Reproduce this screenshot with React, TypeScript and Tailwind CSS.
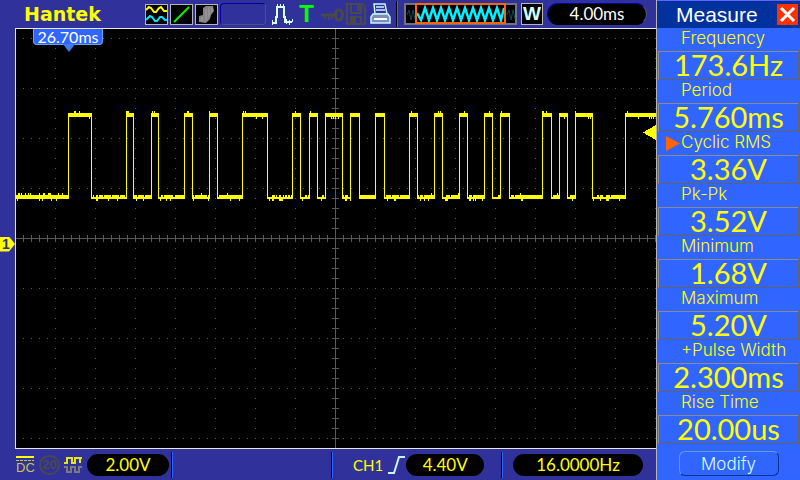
import type { ReactNode } from "react";

const measurements = [
  { label: "Frequency",    value: "173.6Hz" },
  { label: "Period",       value: "5.760ms" },
  { label: "Cyclic RMS",   value: "3.36V", selected: true },
  { label: "Pk-Pk",        value: "3.52V"   },
  { label: "Minimum",      value: "1.68V"   },
  { label: "Maximum",      value: "5.20V"   },
  { label: "+Pulse Width", value: "2.300ms" },
  { label: "Rise Time",    value: "20.00us" },
];

// Rising / falling edge of every pulse, in plot units
const pulses = [
  [68, 91], [126, 133], [151, 158], [184, 192], [209, 217], [242, 267],
  [292, 300], [309, 317], [325, 342], [350, 359], [375, 384], [409, 417],
  [434, 442], [459, 467], [484, 492], [500, 509], [542, 551], [559, 567],
  [575, 592], [625, 655],
];

// Sampling noise on top of both levels: [x, width]
const highUp = [[74, 2], [79, 1], [126, 3], [152, 1], [154, 1], [187, 2], [209, 1], [243, 1], [245, 1], [295, 1], [310, 1], [411, 1], [438, 1], [440, 1], [464, 1], [489, 1], [501, 1], [542, 2], [546, 1], [575, 1], [627, 1]];
const highDown = [[89, 1], [256, 1], [262, 1], [331, 1], [333, 1], [335, 1], [338, 1], [564, 1], [588, 1], [590, 1], [638, 1], [649, 1], [651, 1], [653, 1]];
const lowUp = [[18, 2], [21, 1], [25, 1], [28, 1], [30, 1], [39, 1], [43, 2], [48, 3], [58, 1], [62, 1], [201, 1], [227, 1], [431, 1], [458, 1], [520, 1], [557, 1]];
const lowDown = [[17, 1], [39, 1], [42, 1], [51, 1], [56, 1], [96, 2], [108, 1], [117, 1], [136, 1], [143, 1], [160, 1], [166, 1], [170, 1], [193, 1], [208, 1], [230, 1], [239, 1], [269, 1], [272, 2], [279, 4], [302, 1], [321, 1], [345, 2], [350, 1], [387, 1], [394, 2], [420, 1], [424, 1], [428, 1], [445, 3], [469, 2], [473, 1], [475, 1], [482, 1], [521, 2], [572, 1], [593, 1], [600, 1], [606, 3], [619, 1]];
const lowGaps = [[92, 1], [94, 2], [98, 1], [103, 1], [111, 1], [119, 1], [125, 1], [137, 1], [144, 1], [159, 2], [163, 1], [173, 2], [194, 1], [207, 1], [218, 1], [268, 4], [275, 1], [277, 2], [281, 2], [284, 1], [287, 1], [290, 1], [301, 4], [307, 1], [318, 4], [324, 1], [344, 1], [348, 2], [385, 1], [391, 1], [399, 1], [419, 1], [423, 1], [443, 3], [450, 1], [468, 1], [472, 1], [493, 5], [510, 1], [514, 1], [552, 1], [568, 2], [593, 4], [599, 1], [603, 3], [610, 1]];

const bars = (list: number[][], y: number) => list.map(([x, w]) => `M${x} ${y}h${w}v2h-${w}z`).join("");

function Plot() {
  const columns = Array.from({ length: 16 }, (_, i) => 55 + i * 40);
  const rows = [38, 88, 138, 188, 288, 338, 388, 438];
  let trace = "";
  let x = 16;
  for (const [rise, fall] of pulses) {
    trace += `M${x} 195H${rise + 1}V199H${x}z`;
    trace += `M${rise} 113H${fall + 1}V117H${rise}z`;
    trace += `M${rise} 114h1V199h-1z`;
    if (fall < 655) trace += `M${fall} 114h1V199h-1z`;
    x = fall;
  }

  return (
    <svg
      className="block h-full w-full"
      viewBox="16 29 640 419"
      preserveAspectRatio="none"
      shapeRendering="crispEdges"
      role="img"
      aria-label="Channel 1 waveform"
    >
      <g stroke="#5a5a5a" strokeWidth="1" fill="none">
        {rows.map((y) => (
          <path key={y} d={`M23 ${y + 0.5}H656`} strokeDasharray="1 7" />
        ))}
        {columns.map((c) => (
          <path key={c} d={`M${c + 0.5} 48V440`} strokeDasharray="1 9" />
        ))}
        {/* Centre axes with their ticks */}
        <path d="M16 238.5H656M335.5 29V448" />
        <path d="M23 238.5H656" strokeWidth="7" strokeDasharray="1 7" />
        <path d="M335.5 38V448" strokeWidth="7" strokeDasharray="1 9" />
      </g>
      <g fill="#ffff00">
        <path d={trace} />
        <path d={bars(highUp, 111) + bars(highDown, 117) + bars(lowUp, 193) + bars(lowDown, 199)} />
        <path d="M656 125L643 132.5L656 140z" />
      </g>
      <path fill="#000" d={bars(lowGaps, 195)} />
    </svg>
  );
}

function IconBox({ children }: { children?: ReactNode }) {
  return (
    <div className="h-[21px] w-[23px] border border-[#b5b5b5] bg-black">
      {children}
    </div>
  );
}

function Pill({ className, children }: { className: string; children: ReactNode }) {
  return (
    <div className={`flex h-[22px] shrink-0 items-center justify-center rounded-full bg-black ${className}`}>
      {children}
    </div>
  );
}

function TopBar() {
  return (
    <header className="flex h-7 shrink-0 items-center">
      <h1 className="w-[145px] shrink-0 pl-6 font-['DejaVu_Sans'] text-[19px] leading-6 font-bold text-[#ffff00]">
        Hantek
      </h1>
      <div className="flex shrink-0 items-center gap-0.5">
        <IconBox>
          <svg viewBox="0 0 21 19" fill="none" strokeWidth="2">
            <path stroke="#ffff00" d="M0 5L3 2L5 3L8 7L10 7L13 3L15 2L18 6L21 6" />
            <path stroke="#00e8ff" d="M0 15L4 11L6 12L9 16L11 16L14 12L16 12L19 15L21 15" />
          </svg>
        </IconBox>
        <IconBox>
          <svg viewBox="0 0 21 19" fill="none">
            <path stroke="#00f800" strokeWidth="2" d="M3 17L18 2" />
          </svg>
        </IconBox>
        <IconBox>
          <svg viewBox="0 0 21 19">
            <path fill="#848484" d="M7 3L10 1L17 1L18 6L15 10L14 14L10 18L3 17L3 11L7 10z" />
            <path stroke="#a0a0a0" strokeWidth="1" fill="none" d="M10 4V15M13 2V12M16 3V7M6 12V16" />
          </svg>
        </IconBox>
        <div className="h-[22px] w-[46px] rounded border border-t-[#0000a0] border-r-[#505078] border-b-[#505078] border-l-[#0000a0]" />
      </div>

      <div className="ml-[5px] flex shrink-0 items-center">
        <svg className="h-[22px] w-[22px]" viewBox="0 0 22 22" fill="none" stroke="#d6ffff">
          <path strokeWidth="2" d="M1 20H5V14H6V4H13V14H14V19H21" />
          <path strokeWidth="1" d="M1.5 17V22M4.5 16V21M6.5 1V6M9.5 1V4M12.5 1V6M15.5 16V21M18.5 17V22M21.5 16V19" />
        </svg>
        <span className="w-[27px] text-center font-['Liberation_Sans'] text-[24px] leading-6 font-bold text-[#00ff00]">T</span>
        <svg className="h-[22px] w-6" viewBox="0 0 24 22" fill="none" stroke="#494949">
          <path strokeWidth="3" d="M1 12H16" />
          <path strokeWidth="2" d="M5 13V16M9 13V17M12 13V16" />
          <ellipse cx="19" cy="12" rx="3.5" ry="5" strokeWidth="3" />
        </svg>
        <svg className="ml-0.5 h-[22px] w-5" viewBox="0 0 20 22" fill="none" stroke="#494949">
          <path strokeWidth="2" d="M1 1H17L19 4V21H1z" />
          <path strokeWidth="2" d="M5 1V10H15V1M5 21V14H15V21" />
          <path fill="#494949" stroke="none" d="M11 2H14V8H11zM6 15H10V21H6z" />
        </svg>
        <svg className="ml-1 h-[22px] w-[21px]" viewBox="0 0 21 22" fill="none" stroke="#c8f4ff">
          <path strokeWidth="1.5" d="M5 11L4 1H15L17 11z" />
          <path strokeWidth="1.5" d="M6 4H14M6 7H15" />
          <path strokeWidth="1.5" fill="#7890b8" d="M3 11H18L20 14V20H1V14z" />
          <path strokeWidth="2" stroke="#fff" d="M4 16H17" />
        </svg>
      </div>

      <div className="ml-[5px] h-[26px] w-0.5 shrink-0 border-l border-l-black bg-[#3165ff]" />

      <svg className="ml-1.5 h-[22px] w-[113px] shrink-0" viewBox="0 0 113 22" fill="none">
        <path fill="#000" stroke="#73737b" strokeWidth="2" d="M1 1H112V21H1z" />
        <path stroke="#104858" d="M3 12L5 7L7 17L9 7L11 16M103 12L105 7L107 17L109 7L111 16" />
        <path
          stroke="#00f0ff"
          strokeWidth="2.5"
          d="M13 10L17 17L21 5L25 17L29 5L33 17L37 5L41 17L45 5L49 17L53 5L57 17L61 5L65 17L69 5L73 17L77 5L81 17L85 5L89 17L93 5L97 17L100 5"
        />
        <path stroke="#ff6500" strokeWidth="2" d="M12 1H101V20H12z" />
      </svg>
      <div className="ml-1 flex h-[22px] w-[22px] shrink-0 items-center justify-center border border-[#b5b5b5] bg-black font-['Liberation_Sans'] text-[19px] font-bold text-[#d6ffff]">
        W
      </div>
      <Pill className="ml-1 w-[100px] border border-t-[#0000a0] border-r-[#505078] border-b-black border-l-[#0000a0] text-white">
        4.00ms
      </Pill>
    </header>
  );
}

function BottomBar() {
  return (
    <footer className="grid h-[31px] shrink-0 grid-cols-[171fr_160fr_170fr_155fr] items-center text-[#ffff00]">
      <div className="flex items-center pl-4">
        <div className="w-[18px] font-['Liberation_Sans'] text-[13px] leading-3">
          <svg className="block h-1.5 w-[18px]" viewBox="0 0 18 6" shapeRendering="crispEdges">
            <path fill="#ffff00" d="M0 0H18V2H0z" />
            <path stroke="#c6c64a" strokeDasharray="3 1" d="M0 4.500H18" />
          </svg>
          <span className="text-[#c6c64a]">DC</span>
        </div>
        <div className="ml-[5px] flex h-5 w-[21px] items-center justify-center rounded-full border-2 border-[#494949] font-['Liberation_Sans'] text-[13px] font-bold text-[#494949]">
          20
        </div>
        <svg className="ml-1 h-[18px] w-[19px]" viewBox="0 0 19 18" fill="none" strokeWidth="2">
          <path stroke="#e7e710" d="M0 7H3V2H8V7H11V2H16V7M15 2H18" />
          <path stroke="#7b7b7b" d="M0 11H3V16H7V11H11V16H15V11H18" />
        </svg>
        <Pill className="ml-1 w-[82px]">2.00V</Pill>
      </div>
      <div className="h-[26px] border-l border-l-black">
        <div className="h-full border-l border-l-[#3165ff]" />
      </div>
      <div className="flex h-[26px] items-center border-l border-l-black">
        <div className="h-full w-px bg-[#3165ff]" />
        <span className="ml-5 text-[15px]">CH1</span>
        <svg className="ml-1 h-5 w-[19px]" viewBox="0 0 19 20" fill="none" stroke="#c8f4ff" strokeWidth="2">
          <path d="M1 18H7L12 2H18" />
        </svg>
        <Pill className="w-[78px]">4.40V</Pill>
      </div>
      <div className="flex h-[26px] items-center border-l border-l-black">
        <div className="h-full w-px bg-[#3165ff]" />
        <Pill className="ml-2.5 w-[130px]">16.0000Hz</Pill>
      </div>
    </footer>
  );
}

function MeasurePanel() {
  return (
    <aside className="flex w-36 shrink-0 flex-col border-l border-l-[#b5b5b5] bg-[#3165ff]">
      <div className="flex h-7 shrink-0 items-center border-t border-t-[#6363ff] bg-[#00319c] pl-[19px]">
        <h2 className="font-['Liberation_Sans'] text-[21px] leading-6 text-white">Measure</h2>
        <button type="button" aria-label="Close" className="mr-0.5 ml-auto h-[21px] w-[21px] bg-[#ff3100]">
          <svg viewBox="0 0 21 21" fill="none" stroke="#fff" strokeWidth="3">
            <path d="M4 4L17 17M17 4L4 17" />
          </svg>
        </button>
      </div>

      <dl className="px-px text-[#ffff00]">
        {measurements.map((m) => (
          <div key={m.label}>
            <dt className="flex h-[23px] items-center pb-[3px] font-['Inter'] text-[17px] leading-5 font-light whitespace-nowrap">
              <span className="flex w-[23px] shrink-0 justify-end pt-[3px] pr-px">
                {m.selected && (
                  <svg className="h-[15px] w-3.5" viewBox="0 0 14 15">
                    <path fill="#ff6500" d="M0 0L14 7.500L0 15z" />
                  </svg>
                )}
              </span>
              {m.label}
            </dt>
            <dd className="flex h-[29px] items-center justify-center border border-t-[#8c8c8c] border-r-[#636363] border-b-[#636363] border-l-[#8c8c8c] pb-px text-[29px] leading-6">
              {m.value}
            </dd>
          </div>
        ))}
      </dl>

      <button
        type="button"
        className="mx-auto mt-[7px] h-[25px] w-[100px] rounded-md border border-t-[#639cce] border-r-[#00319c] border-b-[#00319c] border-l-[#639cce] font-['Inter'] text-[17px] leading-5 font-light text-[#d6ffff]"
      >
        Modify
      </button>
    </aside>
  );
}

export default function App() {
  return (
    <div className="flex h-screen w-full overflow-hidden bg-[#31319c] font-['Lato',sans-serif] text-[17px] leading-5">
      <main className="flex min-w-0 flex-1 flex-col">
        <TopBar />
        <section className="flex min-h-0 flex-1">
          <div className="relative w-[15px] shrink-0">
            {/* Ground level of channel 1 */}
            <div className="absolute top-1/2 left-0 -mt-0.5 h-[15px] w-[15px] bg-[#ffff00] pl-0.5 font-['Liberation_Sans'] text-[14px] leading-[15px] font-bold text-[#31319c] [clip-path:polygon(0_0,60%_0,100%_50%,60%_100%,0_100%)]">
              1
            </div>
          </div>
          <div className="relative min-w-0 flex-1 border-y border-l border-[#e7e7e7] bg-black">
            <Plot />
            <div className="absolute top-0 left-[17px] flex h-4 w-[70px] items-center justify-center rounded-b border border-t-0 border-[#63a5ef] bg-[#3165ff] text-[16px] text-white">
              26.70ms
              <svg className="absolute top-[15px] left-[29px] h-2 w-3" viewBox="0 0 12 8">
                <path fill="#3f7df5" d="M0 0H12L6 8z" />
              </svg>
            </div>
          </div>
        </section>
        <BottomBar />
      </main>
      <MeasurePanel />
    </div>
  );
}
